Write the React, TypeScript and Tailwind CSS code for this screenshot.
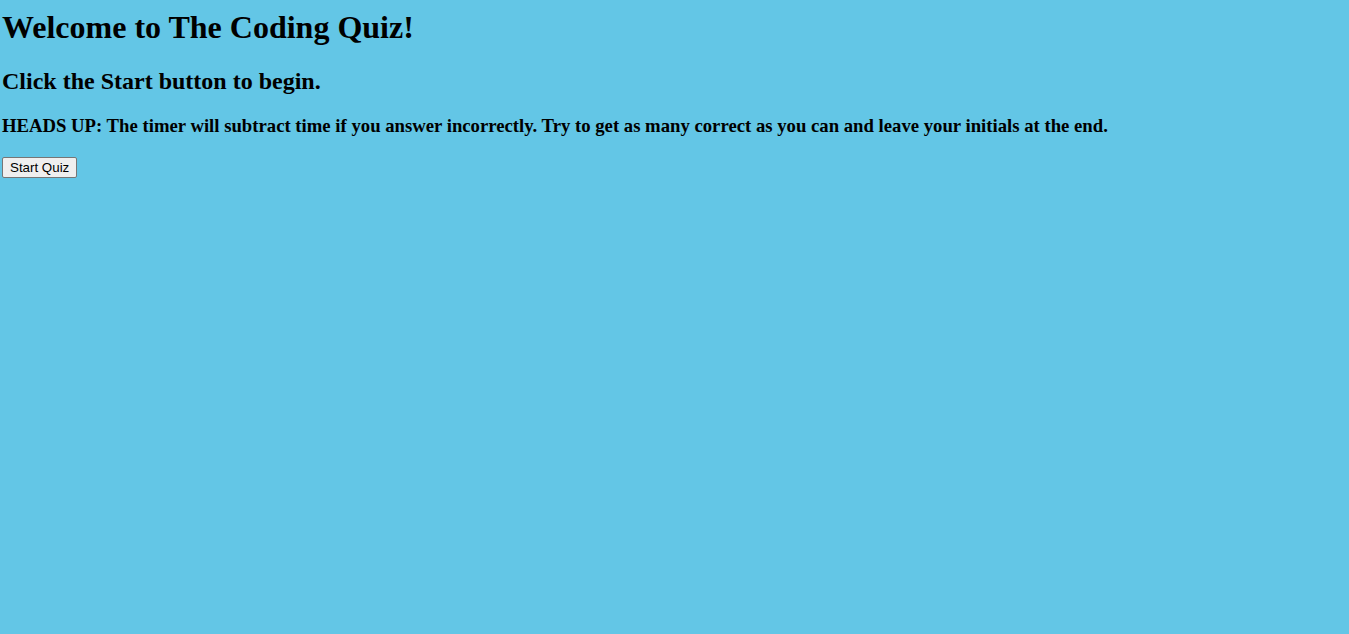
export default function App() {
  return (
    <div className="min-h-screen bg-[#63c6e6] pl-[2px] pt-[9px] font-['Liberation_Serif',serif] text-black">
      <h1 className="text-[32px] font-bold leading-[37px] mb-[21px]">Welcome to The Coding Quiz!</h1>
      <h2 className="text-[24px] font-bold leading-[28px] mb-[20px]">Click the Start button to begin.</h2>
      <h3 className="text-[18.72px] font-bold leading-[21.5px] mb-[20px]">
        HEADS UP: The timer will subtract time if you answer incorrectly. Try to get as many correct as you can and leave your initials at the end.
      </h3>
      <button className="block bg-[#efefef] border border-[#767676] rounded-[2px] px-[7px] py-[1px] text-[13.33px] leading-[17px] font-['Liberation_Sans',sans-serif]">
        Start Quiz
      </button>
    </div>
  );
}
